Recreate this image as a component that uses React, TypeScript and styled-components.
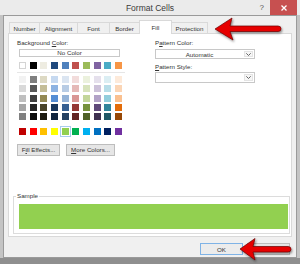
import styled, { createGlobalStyle } from 'styled-components';

const GlobalStyle = createGlobalStyle`
  html, body {
    margin: 0;
    padding: 0;
    background: #fff;
  }
  body {
    font-family: 'Liberation Sans', Arial, sans-serif;
  }
`;

const tabs: [string, number][] = [
  ['Number', 31],
  ['Alignment', 39],
  ['Font', 33],
  ['Border', 31],
  ['Fill', 33],
  ['Protection', 37],
];

const themeRow = ['#FFFFFF', '#000000', '#EEECE1', '#1F497D', '#4F81BD', '#C0504D', '#9BBB59', '#8064A2', '#4BACC6', '#F79646'];

const tintRows = [
  ['#F2F2F2', '#7F7F7F', '#DDD9C3', '#C6D9F0', '#DBE5F1', '#F2DCDB', '#EBF1DD', '#E5E0EC', '#DBEEF3', '#FDEADA'],
  ['#D9D9D9', '#595959', '#C4BD97', '#8DB3E2', '#B8CCE4', '#E5B9B7', '#D7E3BC', '#CCC1D9', '#B7DDE8', '#FBD5B5'],
  ['#BFBFBF', '#404040', '#938953', '#548DD4', '#95B3D7', '#D99694', '#C3D69B', '#B2A2C7', '#92CDDC', '#FAC08F'],
  ['#A6A6A6', '#262626', '#494429', '#17365D', '#366092', '#953734', '#76923C', '#5F497A', '#31859B', '#E36C09'],
  ['#808080', '#0D0D0D', '#1D1B10', '#0F243E', '#244061', '#632423', '#4F6128', '#3F3151', '#205867', '#974806'],
];

const standardRow = ['#C00000', '#FF0000', '#FFC000', '#FFFF00', '#92D050', '#00B050', '#00B0F0', '#0070C0', '#002060', '#7030A0'];

const SELECTED = '#92D050';

const App = () => {
  return (
    <>
      <GlobalStyle />
      <Window>
        <TitleBar>
          <Title>Format Cells</Title>
          <Controls>
            <Help>?</Help>
            <CloseButton>
              <svg width="6" height="6" viewBox="0 0 6 6">
                <path d="M0.5 0.5 L5.5 5.5 M5.5 0.5 L0.5 5.5" stroke="#fff" strokeWidth="1.3" />
              </svg>
            </CloseButton>
          </Controls>
        </TitleBar>

        <Client>
          <TabStrip>
            {tabs.map(([label, w]) => (
              <Tab key={label} $width={w} $active={label === 'Fill'}>
                {label}
              </Tab>
            ))}
          </TabStrip>

          <Panel>
            <Columns>
              <LeftCol>
                <Label>
                  Background <u>C</u>olor:
                </Label>
                <NoColor>No Color</NoColor>
                <Palette>
                  <SwatchGrid>
                    {themeRow.map(c => (
                      <Swatch key={c} $color={c} />
                    ))}
                  </SwatchGrid>
                  <Divider />
                  <SwatchGrid>
                    {tintRows.flat().map((c, i) => (
                      <Swatch key={i} $color={c} />
                    ))}
                  </SwatchGrid>
                  <StandardGrid>
                    {standardRow.map(c => (
                      <Swatch key={c} $color={c} $selected={c === SELECTED} />
                    ))}
                  </StandardGrid>
                </Palette>
                <ButtonRow>
                  <SmallButton $width={43}>
                    F<u>i</u>ll Effects...
                  </SmallButton>
                  <SmallButton $width={49}>
                    <u>M</u>ore Colors...
                  </SmallButton>
                </ButtonRow>
              </LeftCol>

              <RightCol>
                <Label>
                  P<u>a</u>ttern Color:
                </Label>
                <Select $height={10}>
                  <SelectValue>Automatic</SelectValue>
                  <Chevron>
                    <svg width="5" height="3" viewBox="0 0 5 3">
                      <path d="M0.3 0.3 L2.5 2.5 L4.7 0.3" fill="none" stroke="#555" strokeWidth="0.9" />
                    </svg>
                  </Chevron>
                </Select>
                <Label $top={3}>
                  <u>P</u>attern Style:
                </Label>
                <Select $height={11} $top={1}>
                  <SelectValue />
                  <Chevron>
                    <svg width="5" height="3" viewBox="0 0 5 3">
                      <path d="M0.3 0.3 L2.5 2.5 L4.7 0.3" fill="none" stroke="#555" strokeWidth="0.9" />
                    </svg>
                  </Chevron>
                </Select>
              </RightCol>
            </Columns>

            <SampleBox>
              <legend>Sample</legend>
              <SampleFill $color={SELECTED} />
            </SampleBox>
          </Panel>

          <DialogButtons>
            <DialogButton $default>OK</DialogButton>
            <DialogButton>Cancel</DialogButton>
          </DialogButtons>
        </Client>
        <BottomEdge />

        <Arrows viewBox="0 0 300 264">
          <defs>
            <filter id="arrowShadow" x="-20%" y="-50%" width="140%" height="200%">
              <feDropShadow dx="1" dy="1.5" stdDeviation="0.8" floodColor="#000" floodOpacity="0.45" />
            </filter>
          </defs>
          <path
            d="M215 29 L232 18 L230 26 L278 26 Q281 26 281 28.75 Q281 31.5 278 31.5 L230 31.5 L233 40 Z"
            fill="#e60000"
            stroke="#6a0000"
            strokeWidth="0.7"
            filter="url(#arrowShadow)"
          />
          <path
            d="M240 249 L255 238.5 L253 246.5 L288 246.5 Q291 246.5 291 249.25 Q291 252 288 252 L253 252 L255 260 Z"
            fill="#e60000"
            stroke="#6a0000"
            strokeWidth="0.7"
            filter="url(#arrowShadow)"
          />
        </Arrows>
      </Window>
    </>
  );
};

export default App;

const Window = styled.div`
  position: relative;
  width: 300px;
  height: 264px;
  display: flex;
  flex-direction: column;
  background: #c4c4c4;
  overflow: hidden;
`;

const TitleBar = styled.div`
  display: grid;
  grid-template-columns: 1fr auto 1fr;
  align-items: center;
  height: 15px;
  background: #ebebeb;
`;

const Title = styled.div`
  grid-column: 2;
  font-size: 8.5px;
  color: #3a3a3a;
`;

const Controls = styled.div`
  grid-column: 3;
  justify-self: end;
  display: flex;
  align-items: stretch;
  height: 15px;
  margin-right: 3px;
`;

const Help = styled.div`
  display: flex;
  align-items: center;
  margin-right: 6px;
  font-size: 8px;
  color: #555;
`;

const CloseButton = styled.div`
  display: flex;
  align-items: center;
  justify-content: center;
  width: 27px;
  background: #c75050;
`;

const Client = styled.div`
  display: flex;
  flex-direction: column;
  box-sizing: border-box;
  height: 243px;
  margin: 0 3px;
  padding: 4px 0 2px;
  border: 1px solid #9a9a9a;
  background: #f0f0f0;
`;

const BottomEdge = styled.div`
  flex: 1;
  background: #8f8f8f;
`;

const TabStrip = styled.div`
  display: flex;
  align-items: flex-end;
  height: 14px;
  padding-left: 5px;
  margin-bottom: -1px;
  position: relative;
  z-index: 1;
`;

const Tab = styled.div<{ $width: number; $active?: boolean }>`
  box-sizing: border-box;
  display: flex;
  align-items: center;
  justify-content: center;
  width: ${p => p.$width}px;
  height: ${p => (p.$active ? 14 : 11)}px;
  margin-left: -1px;
  margin-bottom: ${p => (p.$active ? 0 : 1)}px;
  border: 1px solid #d9d9d9;
  border-bottom: none;
  background: ${p => (p.$active ? '#fff' : '#f0f0f0')};
  font-size: 6.2px;
  color: #333;
  position: relative;
  z-index: ${p => (p.$active ? 1 : 0)};

  &:first-child {
    margin-left: 0;
  }
`;

const Panel = styled.div`
  box-sizing: border-box;
  display: flex;
  flex-direction: column;
  height: 204px;
  margin: 0 4px;
  padding-bottom: 2px;
  border: 1px solid #d9d9d9;
  background: #fff;
`;

const Columns = styled.div`
  display: grid;
  grid-template-columns: 138px 100px;
  padding: 4px 0 0 8px;
`;

const LeftCol = styled.div`
  display: flex;
  flex-direction: column;
`;

const RightCol = styled.div`
  display: flex;
  flex-direction: column;
`;

const Label = styled.div<{ $top?: number }>`
  height: 9px;
  line-height: 9px;
  margin-top: ${p => p.$top ?? 0}px;
  font-size: 6.2px;
  color: #333;
  white-space: nowrap;

  u {
    text-underline-offset: 0.5px;
  }
`;

const NoColor = styled.div`
  box-sizing: border-box;
  width: 101px;
  height: 8px;
  margin: 2px 0 0 2px;
  border: 1px solid #c8c8c8;
  font-size: 6.2px;
  line-height: 6px;
  text-align: center;
  color: #333;
`;

const Palette = styled.div`
  display: flex;
  flex-direction: column;
  margin: 5px 0 0 2px;
`;

const SwatchGrid = styled.div`
  display: grid;
  grid-template-columns: repeat(10, 7px);
  grid-auto-rows: 7px;
  column-gap: 3.67px;
  row-gap: 2.3px;
`;

const StandardGrid = styled(SwatchGrid)`
  margin-top: 7.8px;
`;

const Divider = styled.div`
  height: 1px;
  margin: 3px -2px 3px -2px;
  width: 108px;
  background: #e6e6e6;
`;

const Swatch = styled.div<{ $color: string; $selected?: boolean }>`
  box-sizing: border-box;
  background: ${p => p.$color};
  border: ${p => (p.$color === '#FFFFFF' ? '1px solid #d4d4d4' : 'none')};
  outline: ${p => (p.$selected ? '1px solid #a9cdee' : 'none')};
  outline-offset: 1px;
`;

const ButtonRow = styled.div`
  display: flex;
  gap: 6px;
  margin-top: 9px;
`;

const SmallButton = styled.div<{ $width: number }>`
  box-sizing: border-box;
  display: flex;
  align-items: center;
  justify-content: center;
  width: ${p => p.$width}px;
  height: 12px;
  border: 1px solid #bdbdbd;
  background: #e6e6e6;
  font-size: 6.2px;
  color: #333;
  white-space: nowrap;
`;

const Select = styled.div<{ $height: number; $top?: number }>`
  box-sizing: border-box;
  display: flex;
  align-items: stretch;
  width: 100px;
  height: ${p => p.$height}px;
  margin-top: ${p => p.$top ?? 2}px;
  border: 1px solid #c8c8c8;
  background: #fff;
`;

const SelectValue = styled.div`
  flex: 1;
  display: flex;
  align-items: center;
  justify-content: center;
  font-size: 6.2px;
  color: #333;
`;

const Chevron = styled.div`
  box-sizing: border-box;
  display: flex;
  align-items: center;
  justify-content: center;
  width: 9px;
  margin: 1px;
  border: 1px solid #e4e4e4;
  background: #f6f6f6;
`;

const SampleBox = styled.fieldset`
  box-sizing: border-box;
  margin: auto 1px 0 4px;
  padding: 4px 1px 4px 5px;
  border: 1px solid #dcdcdc;
  min-width: 0;

  legend {
    margin-left: -3px;
    padding: 0 1px;
    font-size: 6.2px;
    line-height: 8px;
    color: #333;
  }
`;

const SampleFill = styled.div<{ $color: string }>`
  height: 25px;
  background: ${p => p.$color};
`;

const DialogButtons = styled.div`
  display: flex;
  justify-content: flex-end;
  gap: 4px;
  margin-top: 6px;
  padding-right: 6px;
`;

const DialogButton = styled.div<{ $default?: boolean }>`
  box-sizing: border-box;
  display: flex;
  align-items: center;
  justify-content: center;
  width: 43px;
  height: 12px;
  border: 1px solid ${p => (p.$default ? '#7fb3e6' : '#bdbdbd')};
  background: ${p => (p.$default ? '#ececec' : '#e6e6e6')};
  font-size: 6.2px;
  color: #333;
`;

const Arrows = styled.svg`
  position: absolute;
  inset: 0;
  width: 300px;
  height: 264px;
  pointer-events: none;
`;
